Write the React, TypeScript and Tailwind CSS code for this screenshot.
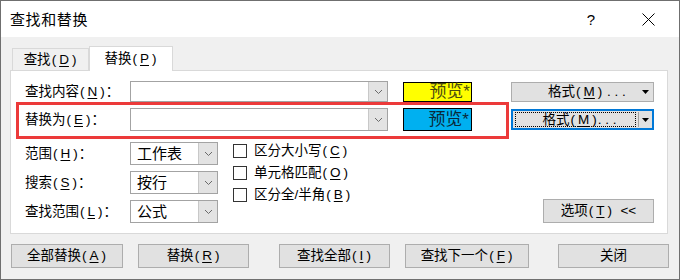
import React from "react";

const Mn = ({ c }: { c: string }) => (
  <span className="whitespace-nowrap">
    <span className="mx-[1px]">(</span>
    <span className="mx-[2px] underline underline-offset-[2px]">{c}</span>
    <span className="mx-[1px]">)</span>
  </span>
);

const Chev = () => (
  <svg width="9" height="6" viewBox="0 0 9 6">
    <path d="M1 1 L4.5 4.5 L8 1" fill="none" stroke="#6a6a6a" strokeWidth="1" />
  </svg>
);

const Tri = () => (
  <svg width="7" height="4" viewBox="0 0 7 4">
    <path d="M0 0 L7 0 L3.5 4 Z" fill="#000" />
  </svg>
);

const Combo = ({ w, h, text }: { w: string; h: string; text?: string }) => (
  <div className={`flex ${w} ${h} shrink-0 border border-[#a3a3a3] bg-white`}>
    <div className="flex flex-1 items-center pl-[6px] text-[15px]">{text}</div>
    <div className="flex w-[19px] items-center justify-center border-l border-[#c8c8c8] bg-[#e3e3e3]">
      <Chev />
    </div>
  </div>
);

const Check = ({ children }: { children: React.ReactNode }) => (
  <div className="flex h-[14px] items-center gap-[7px]">
    <div className="h-[14px] w-[14px] border border-[#333] bg-white" />
    <div className="whitespace-nowrap">{children}</div>
  </div>
);

const Btn = ({ w, children }: { w: string; children: React.ReactNode }) => (
  <div
    className={`flex ${w} h-[24px] items-center justify-center border border-[#adadad] bg-[#e1e1e1] whitespace-nowrap`}
  >
    {children}
  </div>
);

export default function App() {
  return (
    <div className="flex h-[280px] w-[680px] flex-col border border-[#6f6f6f] bg-[#f0f0f0] text-[13.5px] leading-none text-black font-['Liberation_Sans','Noto_Sans_CJK_SC',sans-serif]">
      {/* Title bar */}
      <div className="flex h-[36px] shrink-0 items-center bg-white pl-[9px]">
        <span className="text-[15px] tracking-[0.6px]">查找和替换</span>
        <span className="ml-auto text-[15px]">?</span>
        <svg className="ml-[47px] mr-[24px]" width="13" height="13" viewBox="0 0 13 13">
          <path d="M0.5 0.5 L12.5 12.5 M12.5 0.5 L0.5 12.5" stroke="#000" strokeWidth="1" />
        </svg>
      </div>

      {/* Body */}
      <div className="flex flex-1 flex-col px-[9px] pt-[9px]">
        {/* Tabs */}
        <div className="flex items-end pl-[2px]">
          <div className="flex h-[22px] w-[77px] items-center justify-center border border-b-0 border-[#d9d9d9] bg-[#f0f0f0]">
            查找<Mn c="D" />
          </div>
          <div className="relative z-10 -mb-px flex h-[25px] w-[84px] items-center justify-center border border-b-0 border-[#d9d9d9] bg-white">
            替换<Mn c="P" />
          </div>
        </div>

        {/* Panel */}
        <div className="flex h-[164px] w-[658px] flex-col border border-[#d9d9d9] bg-white">
          {/* Row 1 */}
          <div className="mt-[10px] flex h-[21px] items-center">
            <div className="w-[119px] shrink-0 pl-[14px] whitespace-nowrap">
              查找内容<Mn c="N" />：
            </div>
            <Combo w="w-[258px]" h="h-[21px]" />
            <div className="ml-[15px] flex h-[20px] w-[69px] items-center justify-end border border-black bg-[#ffff00] pr-[1px] text-[17px] text-[#4a4a10]">
              预览*
            </div>
            <div className="ml-[39px] flex h-[20px] w-[143px] items-center border border-[#adadad] bg-[#e1e1e1]">
              <div className="flex-1 pl-[20px] text-center whitespace-nowrap">
                格式<Mn c="M" /> . . .
              </div>
              <div className="pr-[4px]">
                <Tri />
              </div>
            </div>
          </div>

          {/* Row 2 */}
          <div className="flex items-start">
            <div className="ml-[5px] flex h-[37px] w-[493px] items-start border-[3px] border-[#ec3a3a] pt-[3px]">
              <div className="flex h-[23px] w-[111px] shrink-0 items-center pl-[6px] whitespace-nowrap">
                替换为<Mn c="E" />：
              </div>
              <Combo w="w-[258px]" h="h-[23px]" />
              <div className="ml-[15px] flex h-[23px] w-[69px] items-center justify-end border border-black bg-[#00b0f0] pr-[2px] text-[17px] text-[#0a2a3a]">
                预览*
              </div>
            </div>
            <div className="ml-[2px] mt-[7px] flex h-[21px] w-[143px] items-center border-2 border-[#0078d7] bg-[#e1e1e1]">
              <div className="mx-[2px] flex h-[15px] flex-1 items-center justify-center border border-dotted border-black pl-[8px] whitespace-nowrap">
                格式<Mn c="M" /> . . .
              </div>
              <div className="h-[15px] w-px bg-[#a0a0a0]" />
              <div className="px-[3px]">
                <Tri />
              </div>
            </div>
          </div>

          {/* Lower section */}
          <div className="mt-[3px] flex flex-1">
            <div className="flex flex-col gap-[6px]">
              <div className="flex h-[23px] items-center">
                <div className="w-[119px] shrink-0 pl-[14px] whitespace-nowrap">
                  范围<Mn c="H" />：
                </div>
                <Combo w="w-[88px]" h="h-[23px]" text="工作表" />
              </div>
              <div className="flex h-[23px] items-center">
                <div className="w-[119px] shrink-0 pl-[14px] whitespace-nowrap">
                  搜索<Mn c="S" />：
                </div>
                <Combo w="w-[88px]" h="h-[23px]" text="按行" />
              </div>
              <div className="flex h-[23px] items-center">
                <div className="w-[119px] shrink-0 pl-[14px] whitespace-nowrap">
                  查找范围<Mn c="L" />：
                </div>
                <Combo w="w-[88px]" h="h-[23px]" text="公式" />
              </div>
            </div>

            <div className="ml-[15px] mt-[2px] flex flex-col gap-[8px]">
              <Check>
                区分大小写<Mn c="C" />
              </Check>
              <Check>
                单元格匹配<Mn c="O" />
              </Check>
              <Check>
                区分全/半角<Mn c="B" />
              </Check>
            </div>

            <div className="ml-auto mr-[13px] mb-[10px] flex items-end">
              <Btn w="w-[111px]">
                选项<Mn c="T" />&nbsp;&nbsp;&lt;&lt;
              </Btn>
            </div>
          </div>
        </div>

        {/* Bottom buttons */}
        <div className="mt-[10px] flex items-center pl-[1px]">
          <Btn w="w-[112px]">
            全部替换<Mn c="A" />
          </Btn>
          <div className="ml-[15px]">
            <Btn w="w-[111px]">
              替换<Mn c="R" />
            </Btn>
          </div>
          <div className="ml-[30px]">
            <Btn w="w-[111px]">
              查找全部<Mn c="I" />
            </Btn>
          </div>
          <div className="ml-[15px]">
            <Btn w="w-[124px]">
              查找下一个<Mn c="F" />
            </Btn>
          </div>
          <div className="ml-[29px]">
            <Btn w="w-[111px]">关闭</Btn>
          </div>
        </div>
      </div>
    </div>
  );
}
